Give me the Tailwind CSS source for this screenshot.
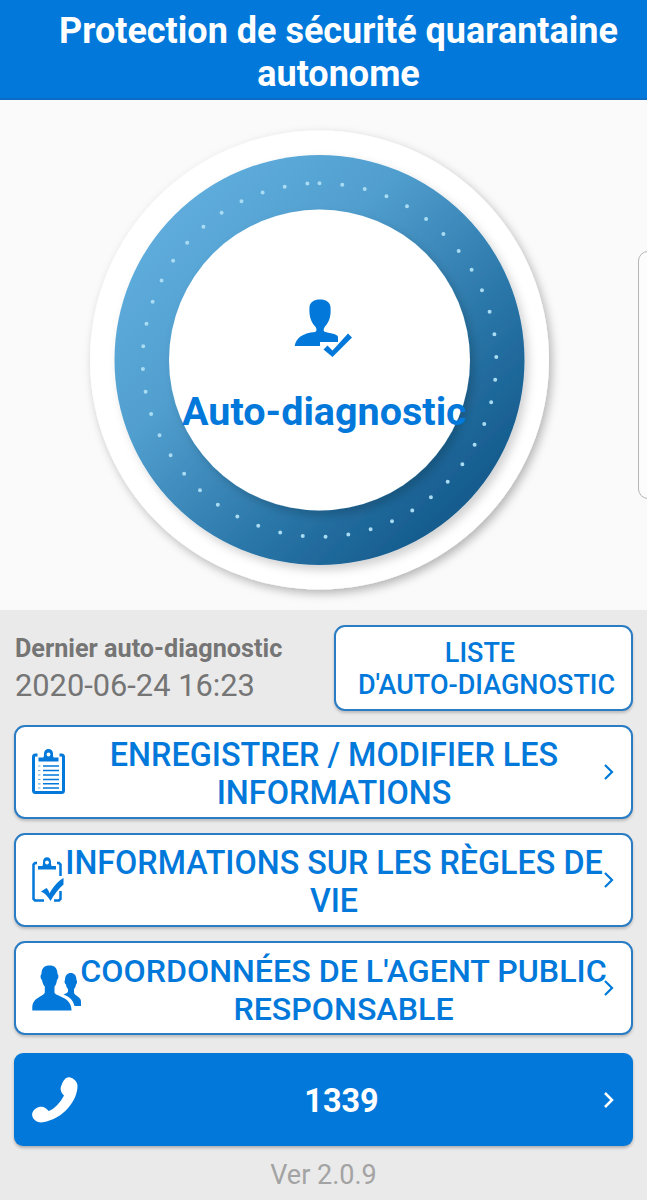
<!DOCTYPE html>
<html lang="fr">

<head>
  <meta charset="UTF-8">
  <meta name="viewport" content="width=device-width, initial-scale=1.0">
  <title>Protection de sécurité quarantaine autonome</title>
  <script src="https://cdn.jsdelivr.net/npm/@tailwindcss/browser@4"></script>
</head>

<body class="relative h-[1200px] w-[647px] overflow-hidden bg-[#eaeaea] font-[Roboto,sans-serif]">

  <!-- Header -->
  <header class="h-[100px] border-b-2 border-[#0a6cc4] bg-[#0279da] pt-[10px] pl-[30px] text-center text-[36px] leading-[43px] font-bold whitespace-nowrap text-white">
    <h1>Protection de sécurité quarantaine<br>autonome</h1>
  </header>

  <!-- Self-diagnosis dial -->
  <section class="relative h-[510px] bg-[#fafafa]">
    <svg class="block h-[510px] w-[647px]" viewBox="0 100 647 510">
      <defs>
        <linearGradient id="ring" x1="0.15" y1="0.15" x2="0.85" y2="0.85">
          <stop offset="0" stop-color="#5eacdc" />
          <stop offset="0.3" stop-color="#519fcf" />
          <stop offset="0.7" stop-color="#2a76a8" />
          <stop offset="1" stop-color="#155b8d" />
        </linearGradient>
        <filter id="shadow" x="-20%" y="-20%" width="140%" height="140%">
          <feDropShadow dx="3" dy="4" stdDeviation="5" flood-color="#000" flood-opacity="0.28" />
        </filter>
        <filter id="softShadow" x="-20%" y="-20%" width="140%" height="140%">
          <feDropShadow dx="4" dy="5" stdDeviation="5" flood-color="#000" flood-opacity="0.18" />
        </filter>
      </defs>
      <circle cx="319.5" cy="360" r="229.5" fill="#fff" filter="url(#shadow)" />
      <circle cx="319.5" cy="360" r="205" fill="url(#ring)" filter="url(#softShadow)" />
      <circle cx="319.5" cy="360" r="176.8" fill="none" stroke="#a9dcf3" stroke-width="4" stroke-linecap="round" stroke-dasharray="0 22.88" transform="rotate(-90 319.5 360)" />
      <circle cx="319.5" cy="360" r="150.5" fill="#fff" filter="url(#softShadow)" />
      <!-- User with check -->
      <g fill="#0279da">
        <path d="M309.5 307C310 302 314 299.5 320 299.5s10 2.500 10.500 7.500c.6 8-.5 14-5.500 19.500-1.500 2-1.800 3.500-.8 5 2.300 1.500 13.800 2 13.800 5.500v5h-18v4h-25.300c1.300-7.500 7.300-13 20.500-14 2-1.500 1.500-3.500 0-5.500-5-5.500-6.200-11.500-5.700-19.500z" />
        <path d="M323.500 349.500l4-4 5 5 15.500-17 4 4-19.500 19.500z" />
      </g>
    </svg>
    <div class="absolute top-[289px] left-[182px] h-12 w-[283px] overflow-hidden text-[39.500px] leading-[46px] font-bold whitespace-nowrap text-[#0279da]">Auto-diagnostic</div>
    <!-- Edge panel handle -->
    <div class="absolute top-[151px] left-[638px] h-[248px] w-6 rounded-[10px] border border-[#b5b5b5] bg-[#fcfcfc]"></div>
  </section>

  <main class="flex flex-col px-[14px] pt-[15px]">
    <!-- Last diagnosis -->
    <div class="flex h-[86px] justify-between">
      <div class="pt-[9px] pl-px whitespace-nowrap text-[#757575]">
        <p class="text-[25.200px] leading-[30px] font-bold">Dernier auto-diagnostic</p>
        <p class="mt-[3px] text-[30.800px] leading-[38px]">2020-06-24 16:23</p>
      </div>
      <button class="h-[86px] w-[299px] rounded-[11px] border-2 border-[#2a7cc4] bg-white pt-[2px] pl-[6px] text-center text-[27px] leading-[32px] font-medium whitespace-nowrap text-[#0279da] shadow-[0_2px_3px_rgba(0,0,0,0.2)]"><span class="pr-[13px]">LISTE</span><br>D'AUTO-DIAGNOSTIC</button>
    </div>

    <!-- Menu -->
    <button class="mt-[14px] flex h-[94px] w-[619px] items-center rounded-[11px] border-2 border-[#2a7cc4] bg-white text-[#0279da] shadow-[0_2px_3px_rgba(0,0,0,0.2)]">
      <svg class="ml-4 h-[46px] w-[34px] shrink-0" viewBox="0 0 34 46">
        <rect x="1.500" y="6" width="30" height="37.500" rx="2" fill="none" stroke="#0279da" stroke-width="3" />
        <path d="M5.500 3.500h22v10h-22z" fill="#fff" />
        <path d="M6.500 12.500V8.500h5c.5-2 .500-2 .500-4 0-2.500 1.800-4.500 4.500-4.500s4.500 2 4.500 4.500c0 2 0 2 .5 4h5v4z" fill="#0279da" />
        <circle cx="16.500" cy="5.500" r="1.900" fill="#fff" />
        <path d="M11 17h16M11 21.500h16M11 26h16M11 30.500h16M11 34.800h16M11 39h16" stroke="#0279da" stroke-width="1.500" />
        <path d="M6 17h2.500M6 21.500h2.500M6 26h2.500M6 30.500h2.500M6 34.800h2.500M6 39h2.500" stroke="#0279da" stroke-width="1.200" opacity=".6" />
      </svg>
      <span class="-mx-10 flex-1 pt-[3px] pr-px text-[32.400px] leading-[38px] font-medium whitespace-nowrap">ENREGISTRER / MODIFIER LES<br>INFORMATIONS</span>
      <svg class="mr-4 h-5 w-3 shrink-0" viewBox="0 0 12 20"><path d="M2 3l7 7-7 7" fill="none" stroke="currentColor" stroke-width="2.200" /></svg>
    </button>

    <button class="mt-[14px] flex h-[94px] w-[619px] items-center rounded-[11px] border-2 border-[#2a7cc4] bg-white text-[#0279da] shadow-[0_2px_3px_rgba(0,0,0,0.2)]">
      <svg class="ml-4 h-[46px] w-[34px] shrink-0" viewBox="0 0 34 46">
        <path d="M5 6H3L1.500 7.500V42L3 43.500h9M25 6h2l1.500 1.500V19M28.500 34v8L27 43.500h-5" fill="none" stroke="#0279da" stroke-width="2.500" />
        <path d="M6 12.500V9h4.500c.5-2 .5-2 .5-4 0-2.800 1.700-4.800 4-4.800s4 2 4 4.800c0 2 0 2 .5 4H24v3.500z" fill="#0279da" />
        <circle cx="15" cy="5.500" r="1.900" fill="#fff" />
        <path d="M9 34.500l5.500-3.500c1.500 1.500 2.500 3.500 3 5.500C21 30 26 24 31.500 21v6.500C27 31.500 22 37.500 18.500 44c-2-4-6-8-9.500-9.500z" fill="#0279da" />
      </svg>
      <span class="-mx-10 flex-1 pt-[3px] pr-px text-[32.300px] leading-[38px] font-medium whitespace-nowrap">INFORMATIONS SUR LES RÈGLES DE<br>VIE</span>
      <svg class="mr-4 h-5 w-3 shrink-0" viewBox="0 0 12 20"><path d="M2 3l7 7-7 7" fill="none" stroke="currentColor" stroke-width="2.200" /></svg>
    </button>

    <button class="mt-[14px] flex h-[94px] w-[619px] items-center rounded-[11px] border-2 border-[#2a7cc4] bg-white text-[#0279da] shadow-[0_2px_3px_rgba(0,0,0,0.2)]">
      <svg class="ml-4 h-[46px] w-[50px] shrink-0" viewBox="0 0 50 46">
        <path d="M9.500 9c0-6 3-8.500 8-8.500s8 2.500 8 8.500c1.500 1 1 5-.5 6-.5 3-1 5-2.500 6.500v6c.5 4 17 4 17 17.500V45.500H.3V43C.3 32 12 31.500 12.800 27.500v-6C11.300 20 10.500 18 10 15c-1.500-1-2-5-.5-6z" fill="#0279da" />
        <path d="M33 15c0-4.500 2.500-7 5.800-7s5.700 2.500 5.700 7c1 1 .5 4-.5 4.500-.3 2-1 3.500-2 4.500v3.500c.5 3.500 7 4 7 9V41h-6.500C41 35 38 32 31.500 29.500c2-1 4.500-1.500 4.500-3.500v-2c-1-1-1.800-2.500-2-4.500-1.300-.5-2-3.500-1-4.500z" fill="#0279da" />
      </svg>
      <span class="-mx-10 flex-1 pt-[3px] pl-[2px] text-[32.200px] leading-[38px] font-medium whitespace-nowrap">COORDONNÉES DE L'AGENT PUBLIC<br>RESPONSABLE</span>
      <svg class="mr-4 h-5 w-3 shrink-0" viewBox="0 0 12 20"><path d="M2 3l7 7-7 7" fill="none" stroke="currentColor" stroke-width="2.200" /></svg>
    </button>

    <!-- Call button -->
    <button class="mt-[18px] flex h-[93px] w-[619px] items-center rounded-[9px] bg-[#0279da] text-white shadow-[0_2px_3px_rgba(0,0,0,0.25)]">
      <svg class="ml-[18px] h-[46px] w-[46px] shrink-0" viewBox="0 0 46 46">
        <path d="M37.500.3c4 .7 8 4.500 8 8.500C45.500 24 31 42 11 45.300 6 46 1.500 43.500.3 39c-.9-4 2.200-7.500 6.700-9 4-1.200 7.200.8 9.500 4 5.500-1.500 12-8.500 15.500-15.500-3.500-3-4.500-7-2-11.500C31.500 2.800 34.500-.2 37.500.3z" fill="#fff" />
      </svg>
      <span class="flex-1 pt-[2px] pl-[2px] text-[32.400px] leading-[38px] font-bold">1339</span>
      <svg class="mr-[18px] h-5 w-3 shrink-0" viewBox="0 0 12 20"><path d="M2 3l7 7-7 7" fill="none" stroke="currentColor" stroke-width="2.500" /></svg>
    </button>

    <p class="mt-[13px] text-center text-[27px] leading-8 text-[#a3a3a3]">Ver 2.0.9</p>
  </main>

</body>

</html>
